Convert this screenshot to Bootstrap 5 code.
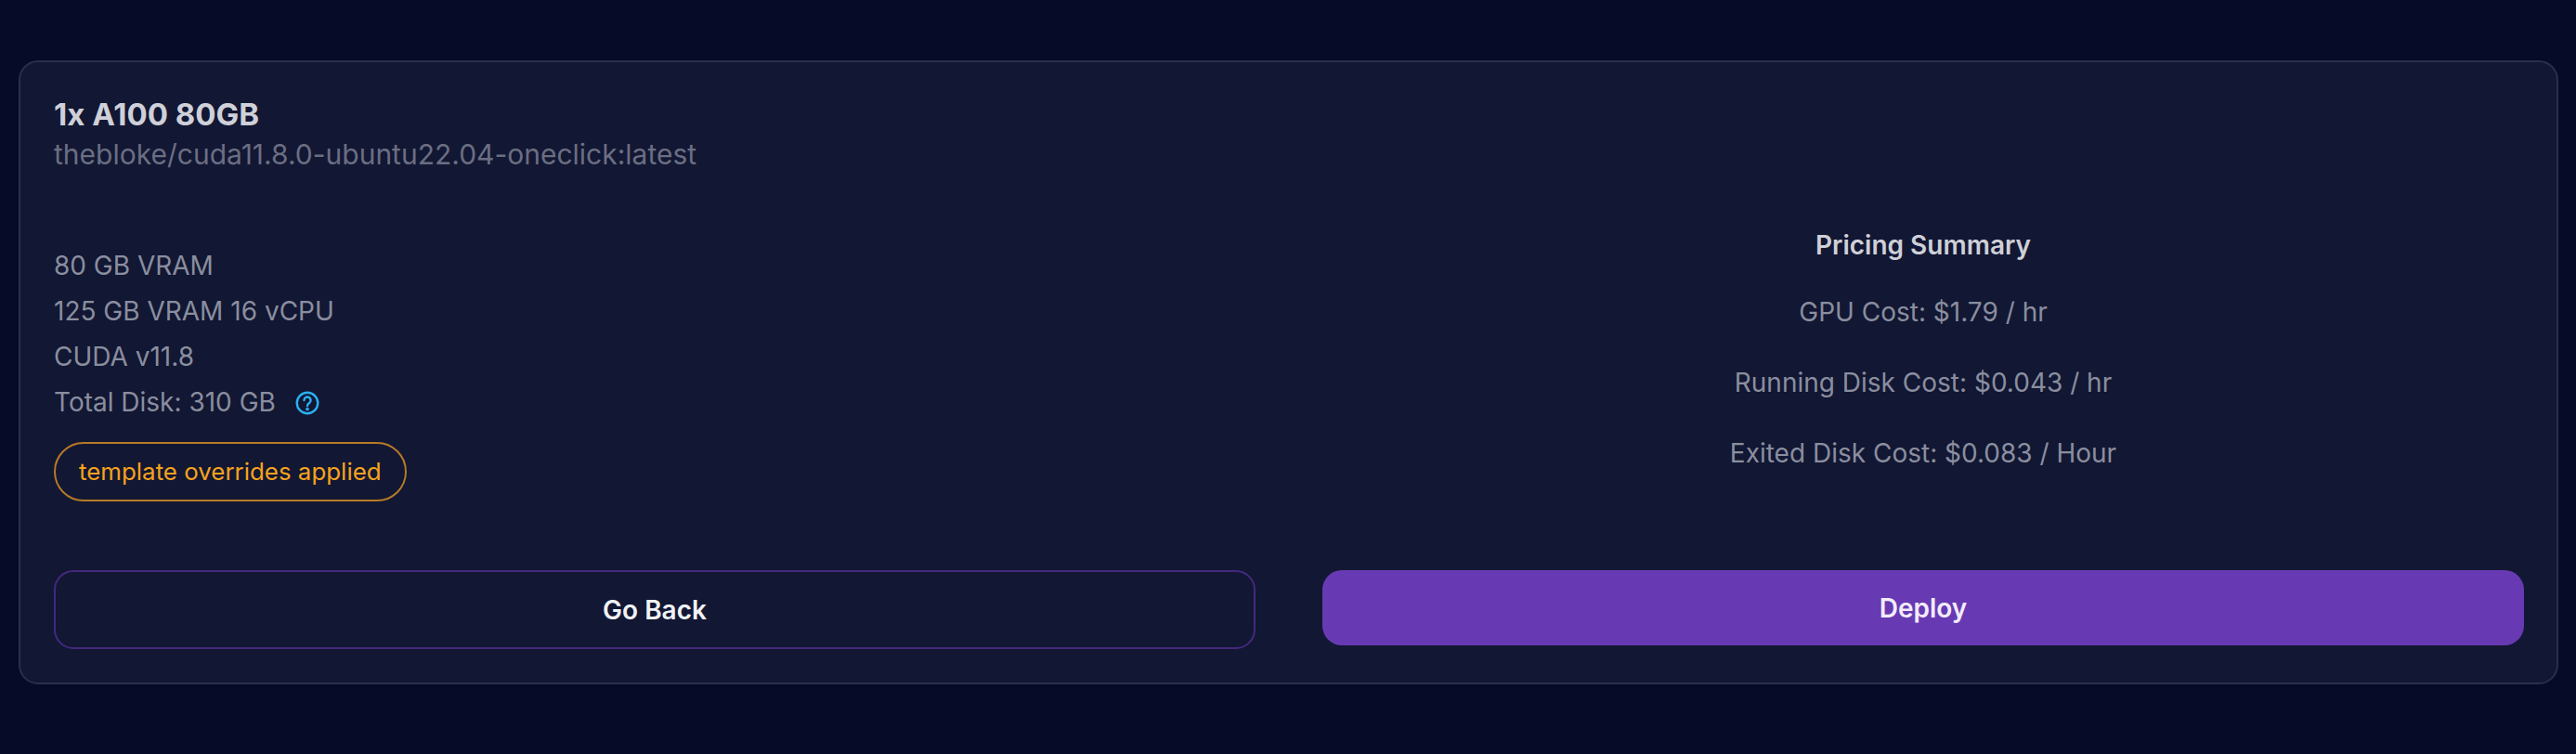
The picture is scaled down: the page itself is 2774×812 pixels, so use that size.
<!DOCTYPE html>
<html lang="en">
<head>
<meta charset="utf-8">
<title>Deploy summary</title>
<link href="https://cdn.jsdelivr.net/npm/bootstrap@5.3.0/dist/css/bootstrap.min.css" rel="stylesheet">
<style>
html, body { height: 100%; }
body { background: #060b27; font-family: Inter, "Liberation Sans", sans-serif; padding: 65px 19px 0 20px; font-size: 28px; line-height: 49px; color: #8a8e9f; }
.sum-card { background: #121733; border: 2px solid #2a2f4e; border-radius: 21px; padding: 34px 35px 37px 36px; height: 672px; }
.sum-title { font-size: 33px; font-weight: 700; line-height: 44px; color: #cfd0d8; margin: 0; }
.sum-sub { font-size: 30px; line-height: 43px; color: #6b6e83; }
.sum-cols { column-gap: 72px; margin-top: 52px; }
.left-col { padding-top: 22px; }
.sum-head { font-size: 28px; font-weight: 600; color: #cfd0d8; line-height: 49px; }
.price-line { line-height: 49px; margin-top: 27px; }
.price-line.first-line { margin-top: 23px; }
.sum-pill { border: 2px solid #b67a27; border-radius: 32px; color: #f5a31d; height: 64px; padding: 0 25px; line-height: 60px; margin-top: 18px; font-size: 25.9px; }
.sum-q { width: 26px; height: 26px; margin-left: 21px; vertical-align: -4px; }
.sum-btn { font-family: Inter, "Liberation Sans", sans-serif; font-size: 28px; font-weight: 600; border-radius: 21px; color: #f1f1f5; }
.btn-back { height: 85px; border: 2px solid #44297f; background: transparent; }
.btn-deploy { height: 81px; border: 0; background: #673ab3; color: #f3ecfb; }
.btn-back:hover { background: transparent; border-color: #44297f; color: #f1f1f5; }
.btn-deploy:hover { background: #673ab3; color: #f3ecfb; }
.btn-row { column-gap: 72px; margin-top: 74px; }
.col-half { flex: 1 1 0; min-width: 0; }
</style>
</head>
<body>
<div class="sum-card">
  <h1 class="sum-title">1x A100 80GB</h1>
  <div class="sum-sub">thebloke/cuda11.8.0-ubuntu22.04-oneclick:latest</div>
  <div class="d-flex sum-cols">
    <div class="col-half left-col">
      <div>80 GB VRAM</div>
      <div>125 GB VRAM 16 vCPU</div>
      <div>CUDA v11.8</div>
      <div>Total Disk: 310 GB<svg class="sum-q" viewBox="0 0 24 24" fill="none" stroke="#2ab1f2" stroke-width="2.2" stroke-linecap="round" aria-hidden="true"><circle cx="12" cy="12" r="10.4"/><path d="M8.7 9.3a3.3 3.3 0 1 1 5.2 2.7c-1.2.8-1.9 1.4-1.9 2.8"/><circle cx="12" cy="18" r=".6" fill="#2ab1f2"/></svg></div>
      <div class="d-inline-block sum-pill">template overrides applied</div>
    </div>
    <div class="col-half text-center">
      <div class="sum-head">Pricing Summary</div>
      <div class="price-line first-line">GPU Cost: $1.79 / hr</div>
      <div class="price-line">Running Disk Cost: $0.043 / hr</div>
      <div class="price-line">Exited Disk Cost: $0.083 / Hour</div>
    </div>
  </div>
  <div class="d-flex btn-row align-items-start">
    <div class="col-half"><button type="button" class="btn sum-btn btn-back w-100">Go Back</button></div>
    <div class="col-half"><button type="button" class="btn sum-btn btn-deploy w-100">Deploy</button></div>
  </div>
</div>
<script src="https://cdn.jsdelivr.net/npm/bootstrap@5.3.0/dist/js/bootstrap.bundle.min.js"></script>
</body>
</html>
